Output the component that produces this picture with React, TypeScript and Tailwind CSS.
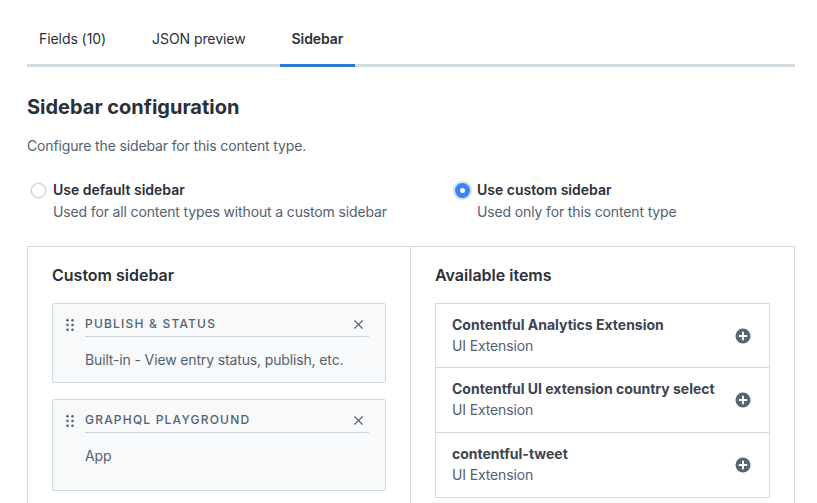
import { X } from "lucide-react";

const tabs = [
  { label: "Fields (10)", active: false },
  { label: "JSON preview", active: false },
  { label: "Sidebar", active: true },
];

const available = [
  { name: "Contentful Analytics Extension", kind: "UI Extension" },
  { name: "Contentful UI extension country select", kind: "UI Extension" },
  { name: "contentful-tweet", kind: "UI Extension" },
];

function DragHandle() {
  return (
    <svg width="8" height="12" viewBox="0 0 8 12" className="shrink-0 text-[#536171]">
      {[1.25, 6, 10.75].map((cy) => (
        <g key={cy}>
          <circle cx="1.5" cy={cy} r="1.3" fill="currentColor" />
          <circle cx="6.5" cy={cy} r="1.3" fill="currentColor" />
        </g>
      ))}
    </svg>
  );
}

function PlusCircle() {
  return (
    <svg width="16" height="16" viewBox="0 0 16 16" className="shrink-0">
      <circle cx="8" cy="8" r="7.5" fill="#5a6472" />
      <path d="M8 4.6v6.8M4.6 8h6.8" stroke="#fff" strokeWidth="2" strokeLinecap="round" />
    </svg>
  );
}

function Radio({ checked }: { checked: boolean }) {
  return checked ? (
    <span className="flex h-[15px] w-[15px] shrink-0 items-center justify-center rounded-full bg-[#3b84f0] shadow-[0_0_0_2px_rgba(59,132,240,0.25)]">
      <span className="h-[5px] w-[5px] rounded-full bg-white" />
    </span>
  ) : (
    <span className="block h-[15px] w-[15px] shrink-0 rounded-full border border-[#c3cfd5] bg-white shadow-[0_0_0_1px_rgba(195,207,213,0.35)]" />
  );
}

function SidebarCard({ title, body, tall }: { title: string; body: string; tall?: boolean }) {
  return (
    <div
      className={`rounded-[2px] border border-[#d3dce0] bg-[#f7f9fa] pl-[13px] pr-[16px] ${
        tall ? "pt-[8px] pb-[24px]" : "pt-[8px] pb-[12px]"
      }`}
    >
      <div className="flex items-center gap-[11px]">
        <DragHandle />
        <div className="flex h-[25px] flex-1 items-center justify-between border-b border-[#c5d2d8]">
          <span className="text-[12px] font-medium tracking-[0.1em] text-[#536171]">{title}</span>
          <X size={15} strokeWidth={1.8} className="mr-[3px] text-[#536171]" />
        </div>
      </div>
      <p className="mt-[13px] pl-[19px] text-[14px] leading-[20px] tracking-[-0.01em] text-[#536171]">{body}</p>
    </div>
  );
}

export default function App() {
  return (
    <div className="min-h-screen bg-white font-['Inter',sans-serif] text-[#2a3039]">
      <div className="mx-[27px] w-[768px] pt-[16px]">
        <nav className="flex gap-[22px] border-b-[3px] border-[#d3dce0]">
          {tabs.map((t) => (
            <div
              key={t.label}
              className={`-mb-[3px] flex h-[51px] items-center border-b-[3px] px-[12px] pb-[3px] text-[14px] tracking-[-0.005em] ${
                t.active ? "border-[#2e75d4] font-semibold text-[#2a3039]" : "border-transparent text-[#2a3039]"
              }`}
            >
              {t.label}
            </div>
          ))}
        </nav>

        <h1 className="mt-[26px] text-[20px] leading-[28px] font-bold">Sidebar configuration</h1>
        <p className="mt-[15px] text-[14px] leading-[20px] tracking-[-0.01em] text-[#536171]">
          Configure the sidebar for this content type.
        </p>

        <div className="mt-[24px] flex">
          <label className="flex w-[428px] gap-[7px] pl-[4px]">
            <span className="pt-[3px]">
              <Radio checked={false} />
            </span>
            <span>
              <span className="block text-[14px] leading-[20px] font-semibold">Use default sidebar</span>
              <span className="mt-[2px] block text-[14px] leading-[20px] tracking-[-0.01em] text-[#536171]">
                Used for all content types without a custom sidebar
              </span>
            </span>
          </label>
          <label className="flex gap-[7px]">
            <span className="pt-[3px]">
              <Radio checked />
            </span>
            <span>
              <span className="block text-[14px] leading-[20px] font-semibold">Use custom sidebar</span>
              <span className="mt-[2px] block text-[14px] leading-[20px] tracking-[-0.01em] text-[#536171]">
                Used only for this content type
              </span>
            </span>
          </label>
        </div>

        <div className="mt-[24px] grid grid-cols-[383px_1fr] border border-[#d3dce0]">
          <section className="border-r border-[#d3dce0] px-[24px] pt-[16px] pb-[24px]">
            <h2 className="text-[16px] leading-[24px] font-semibold">Custom sidebar</h2>
            <div className="mt-[16px] flex flex-col gap-[16px]">
              <SidebarCard title="PUBLISH & STATUS" body="Built-in - View entry status, publish, etc." />
              <SidebarCard title="GRAPHQL PLAYGROUND" body="App" tall />
            </div>
          </section>
          <section className="pl-[24px] pr-[24px] pt-[16px] pb-[24px]">
            <h2 className="text-[16px] leading-[24px] font-semibold">Available items</h2>
            <ul className="mt-[16px] border border-[#d3dce0]">
              {available.map((a, i) => (
                <li
                  key={a.name}
                  className={`flex items-center justify-between pl-[16px] pr-[18px] pt-[11px] ${
                    i > 0 ? "border-t border-[#d3dce0] pb-[12px]" : "pb-[11px]"
                  }`}
                >
                  <div>
                    <div className="text-[14px] leading-[20px] font-bold text-[#3c4450]">{a.name}</div>
                    <div className="mt-[1px] text-[14px] leading-[20px] tracking-[-0.01em] text-[#536171]">{a.kind}</div>
                  </div>
                  <PlusCircle />
                </li>
              ))}
            </ul>
          </section>
        </div>
      </div>
    </div>
  );
}
